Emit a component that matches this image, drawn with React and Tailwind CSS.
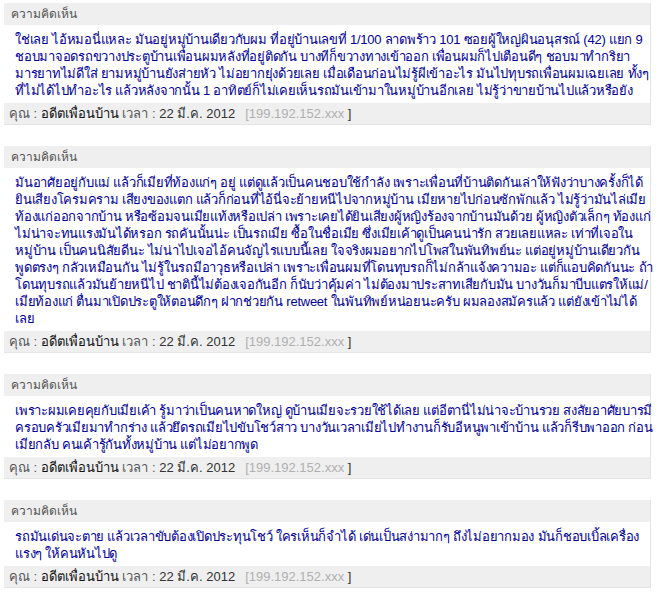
import React from 'react';

const comments = [
  {
    lines: [
      'ใช่เลย ไอ้หมอนี่แหละ มันอยู่หมู่บ้านเดียวกับผม ที่อยู่บ้านเลขที่ 1/100 ลาดพร้าว 101 ซอยผู้ใหญ่ผินอนุสรณ์ (42) แยก 9',
      'ชอบมาจอดรถขวางประตูบ้านเพื่อนผมหลังที่อยู่ติดกัน บางทีก็ขวางทางเข้าออก เพื่อนผมก็ไปเตือนดีๆ ชอบมาทำกริยา',
      'มารยาทไม่ดีใส่ ยามหมู่บ้านยังส่ายหัว ไม่อยากยุ่งด้วยเลย เมื่อเดือนก่อนไม่รู้ผีเข้าอะไร มันไปทุบรถเพื่อนผมเฉยเลย ทั้งๆ',
      'ที่ไม่ได้ไปทำอะไร แล้วหลังจากนั้น 1 อาทิตย์ก็ไม่เคยเห็นรถมันเข้ามาในหมู่บ้านอีกเลย ไม่รู้ว่าขายบ้านไปแล้วหรือยัง',
    ],
  },
  {
    lines: [
      'มันอาศัยอยู่กับแม่ แล้วก็เมียที่ท้องแก่ๆ อยู่ แต่ดูแล้วเป็นคนชอบใช้กำลัง เพราะเพื่อนที่บ้านติดกันเล่าให้ฟังว่าบางครั้งก็ได้',
      'ยินเสียงโครมคราม เสียงของแตก แล้วก็ก่อนที่ไอ้นี่จะย้ายหนีไปจากหมู่บ้าน เมียหายไปก่อนซักพักแล้ว ไม่รู้ว่ามันไล่เมีย',
      'ท้องแก่ออกจากบ้าน หรือซ้อมจนเมียแท้งหรือเปล่า เพราะเคยได้ยินเสียงผู้หญิงร้องจากบ้านมันด้วย ผู้หญิงตัวเล็กๆ ท้องแก่',
      'ไม่น่าจะทนแรงมันได้หรอก รถคันนั้นน่ะ เป็นรถเมีย ซื้อในชื่อเมีย ซึ่งเมียเค้าดูเป็นคนน่ารัก สวยเลยแหละ เท่าที่เจอใน',
      'หมู่บ้าน เป็นคนนิสัยดีนะ ไม่น่าไปเจอไอ้คนจัญไรแบบนี้เลย ใจจริงผมอยากไปโพสในพันทิพย์นะ แต่อยู่หมู่บ้านเดียวกัน',
      'พูดตรงๆ กลัวเหมือนกัน ไม่รู้ในรถมีอาวุธหรือเปล่า เพราะเพื่อนผมที่โดนทุบรถก็ไม่กล้าแจ้งความอะ แต่ก็แอบคิดกันนะ ถ้า',
      'โดนทุบรถแล้วมันย้ายหนีไป ชาตินี้ไม่ต้องเจอกันอีก ก็นับว่าคุ้มค่า ไม่ต้องมาประสาทเสียกับมัน บางวันก็มาบีบแตรให้แม่/',
      'เมียท้องแก่ ตื่นมาเปิดประตูให้ตอนดึกๆ ฝากช่วยกัน retweet ในพันทิพย์หน่อยนะครับ ผมลองสมัครแล้ว แต่ยังเข้าไม่ได้',
      'เลย',
    ],
  },
  {
    lines: [
      'เพราะผมเคยคุยกับเมียเค้า รู้มาว่าเป็นคนหาดใหญ่ ดูบ้านเมียจะรวยใช้ได้เลย แต่อีตานี่ไม่น่าจะบ้านรวย สงสัยอาศัยบารมี',
      'ครอบครัวเมียมาทำกร่าง แล้วยึดรถเมียไปขับโชว์สาว บางวันเวลาเมียไปทำงานก็รับอีหนูพาเข้าบ้าน แล้วก็รีบพาออก ก่อน',
      'เมียกลับ คนเค้ารู้กันทั้งหมู่บ้าน แต่ไม่อยากพูด',
    ],
  },
  {
    lines: [
      'รถมันเด่นจะตาย แล้วเวลาขับต้องเปิดประทุนโชว์ ใครเห็นก็จำได้ เด่นเป็นสง่ามากๆ ถึงไม่อยากมอง มันก็ชอบเบิ้ลเครื่อง',
      'แรงๆ ให้คนหันไปดู',
    ],
  },
];

function Comment({ lines }) {
  return (
    <div className="w-[647px] border-r border-b border-[#e4e4e4]">
      <div className="h-[22px] bg-[#efefef] pl-[7px] text-[12px] leading-[22px] text-[#555555]">
        ความคิดเห็น
      </div>
      <div className="bg-white pl-[11px] pr-1 pt-[6px] pb-[4px] text-[13px] leading-[17px] tracking-[-0.25px] text-[#000099]">
        {lines.map((line, i) => (
          <div key={i} className="whitespace-nowrap">{line}</div>
        ))}
      </div>
      <div className="h-[21px] bg-[#efefef] pl-[5px] text-[13px] leading-[21px] text-[#555555] whitespace-nowrap">
        คุณ : <span className="text-[#111111]">อดีตเพื่อนบ้าน</span> เวลา : <span className="text-[#333333]">22 มี.ค. 2012</span>
        <span className="ml-[10px] text-[#b0b0b0]">[199.192.152.xxx</span>
        <span className="text-[#333333]"> ]</span>
      </div>
    </div>
  );
}

export default function App() {
  return (
    <div
      className="min-h-screen bg-white pl-[4px] pt-[3px]"
      style={{ fontFamily: '"Liberation Sans", Arial, sans-serif' }}
    >
      <div className="flex flex-col gap-[21px]">
        {comments.map((c, i) => (
          <Comment key={i} lines={c.lines} />
        ))}
      </div>
    </div>
  );
}
